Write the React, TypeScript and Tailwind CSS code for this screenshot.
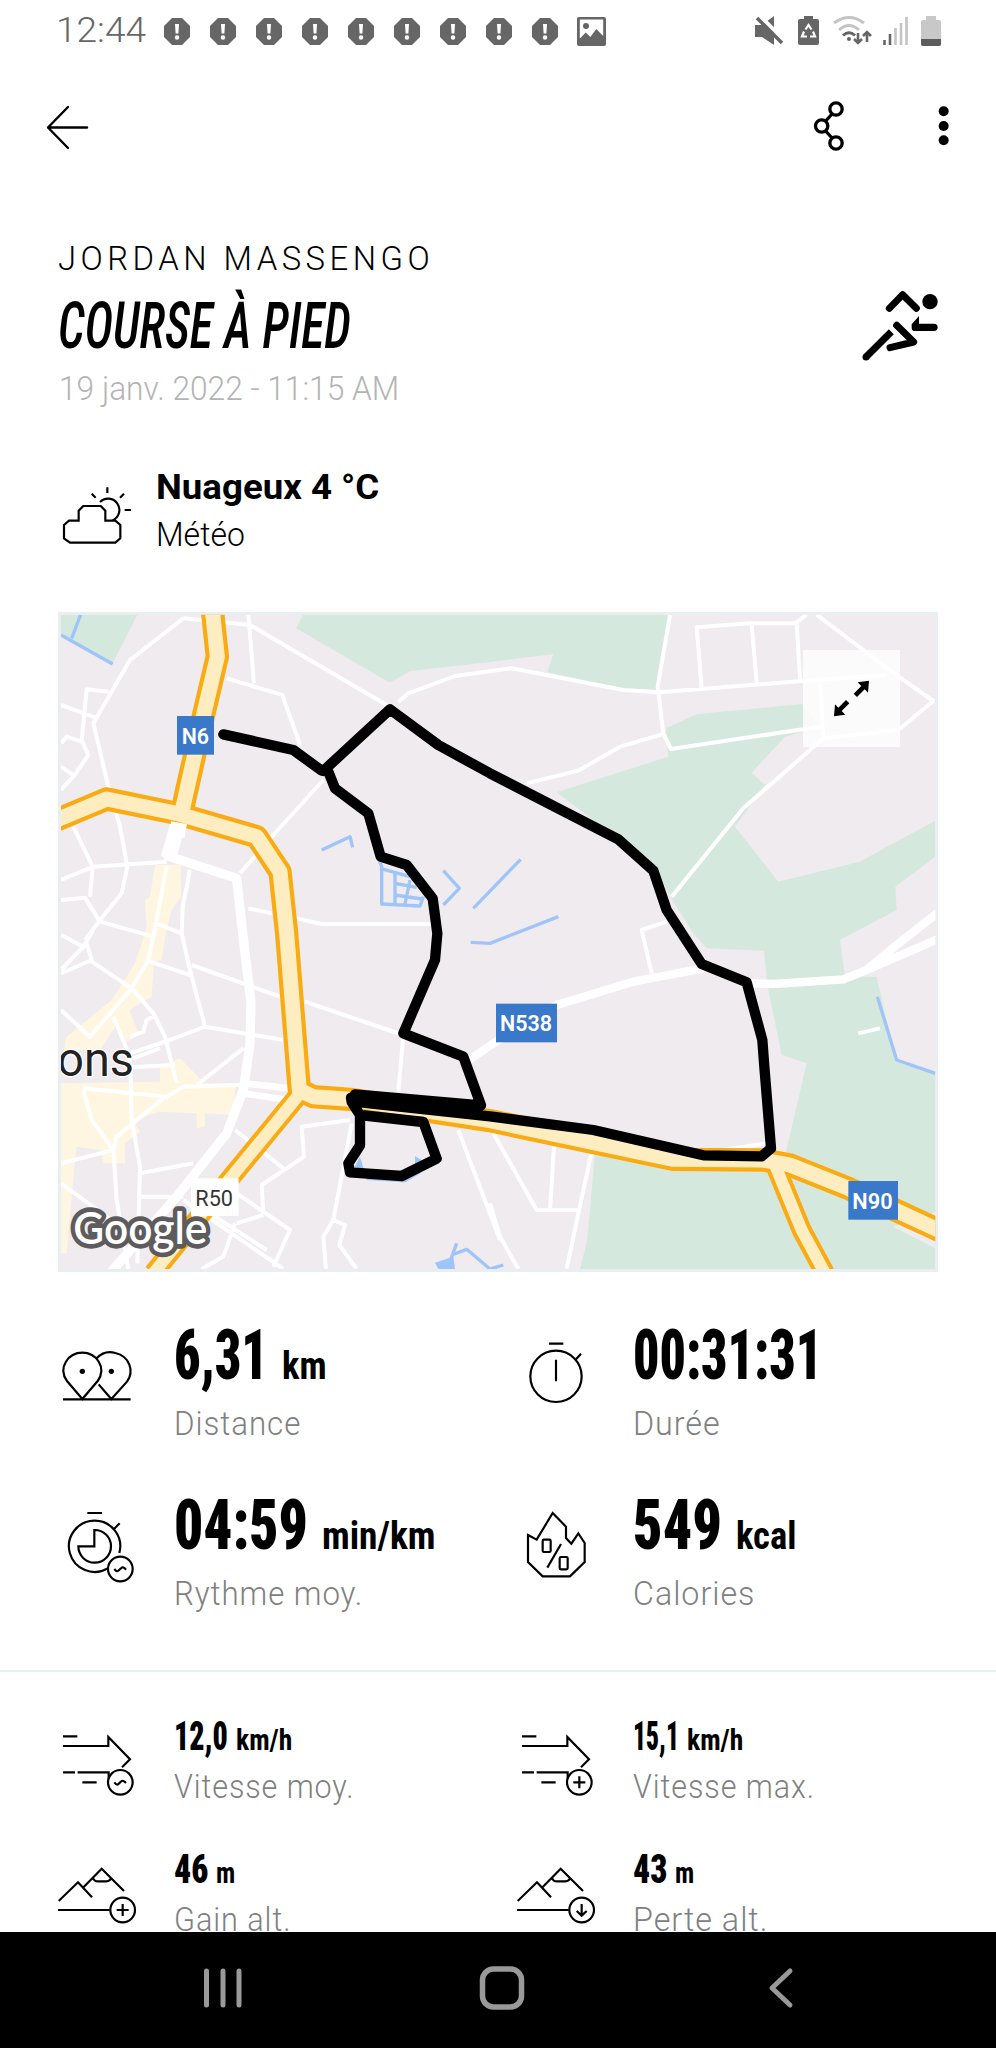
import { useLayoutEffect, useRef, useState, type ReactNode } from "react";

/** Condenses or widens a run of text so that it fills the given width. */
function Fit({ width, className = "", children }: { width: number; className?: string; children: ReactNode }) {
  const ref = useRef<HTMLSpanElement>(null);
  const [scale, setScale] = useState(1);
  useLayoutEffect(() => {
    const measure = () => {
      if (ref.current) setScale(width / ref.current.offsetWidth);
    };
    measure();
    document.fonts.ready.then(measure);
  }, [width]);
  return (
    <span className="inline-block whitespace-nowrap" style={{ width }}>
      <span ref={ref} className={`inline-block origin-left ${className}`} style={{ transform: `scaleX(${scale})` }}>
        {children}
      </span>
    </span>
  );
}

function Alert() {
  return (
    <svg width="26" height="27" viewBox="0 0 26 27">
      <path d="M8 0h10l8 8v11l-8 8H8l-8-8V8z" fill="#666" />
      <path d="M11 6h4l-.6 9.500h-2.800z" fill="#fff" />
      <circle cx="13" cy="19.500" r="2.200" fill="#fff" />
    </svg>
  );
}

function StatusBar() {
  return (
    <div className="flex h-[62px] shrink-0 items-center pl-[56px] pr-[55px] text-[#666]">
      <Fit width={90} className="text-[35px] font-[350] leading-none">12:44</Fit>
      <div className="ml-[18px] flex gap-5">
        {Array.from({ length: 9 }, (_, i) => (
          <Alert key={i} />
        ))}
      </div>
      <svg className="ml-[19px]" width="29" height="29" viewBox="0 0 29 29">
        <path fillRule="evenodd" fill="#666" d="M2 0h25a2 2 0 0 1 2 2v25a2 2 0 0 1-2 2H2a2 2 0 0 1-2-2V2a2 2 0 0 1 2-2zm.8 2.6v19l6-6 4.5 4.5 6-8.2 6.900 7V2.600z" />
        <circle cx="9" cy="9" r="3" fill="#666" />
      </svg>
      <div className="ml-auto flex items-center">
        <svg width="29" height="30" viewBox="0 0 29 30">
          <path d="M0 9h7L19 0v29L7 21H0z" fill="#666" />
          <path d="M2-3L31 26" stroke="#fff" strokeWidth="4" />
          <path d="M2 2l25 25" stroke="#666" strokeWidth="3.500" />
        </svg>
        <svg className="ml-[14px]" width="21" height="30" viewBox="0 0 21 30">
          <path d="M6 0h9v3h4a2 2 0 0 1 2 2v22a2 2 0 0 1-2 2H2a2 2 0 0 1-2-2V5a2 2 0 0 1 2-2h4z" fill="#666" />
          <path d="M7.500 13.500l3-4.500 3 4.500M15 15.500l2 5h-5M9 20.500H4l2-5" fill="none" stroke="#fff" strokeWidth="2.200" />
        </svg>
        <svg className="ml-[14px]" width="40" height="30" viewBox="0 0 40 30">
          <g fill="none" strokeWidth="3">
            <path d="M1 7q15-11 30 0M6 14q10-9 20 0" stroke="#c4c4c4" />
            <path d="M10 19.500q6-5.500 12 0" stroke="#666" />
          </g>
          <circle cx="16" cy="23" r="2" fill="#666" />
          <path d="M25 17v10M21 23l4 4 4-4M34 26V16M30 20l4-4 4 4" fill="none" stroke="#666" strokeWidth="2.600" />
        </svg>
        <svg className="ml-[10px]" width="25" height="30" viewBox="0 0 25 30">
          <path d="M1.500 24v5M7 18v11" stroke="#666" strokeWidth="2.600" />
          <path d="M12.500 12v17M18 7v22M23.500 1v28" stroke="#c4c4c4" strokeWidth="2.600" />
        </svg>
        <svg className="ml-[13px]" width="20" height="31" viewBox="0 0 20 31">
          <path d="M5 0h10v4h3a2 2 0 0 1 2 2v22a2 2 0 0 1-2 2H2a2 2 0 0 1-2-2V6a2 2 0 0 1 2-2h3z" fill="#c8c8c8" />
          <path d="M0 23h20v5a2 2 0 0 1-2 2H2a2 2 0 0 1-2-2z" fill="#5c5c5c" />
        </svg>
      </div>
    </div>
  );
}

function Toolbar() {
  return (
    <div className="flex h-[128px] shrink-0 items-center pl-[46px] pr-[47px]">
      <svg width="44" height="48" viewBox="0 0 44 48" fill="none" stroke="#000" strokeWidth="2.400" strokeLinecap="round" strokeLinejoin="round">
        <path d="M22 5L2 25.500 22 46M2 25.500h39" />
      </svg>
      <svg className="ml-auto" width="32" height="54" viewBox="158 115 96 162" fill="none" stroke="#000" strokeWidth="10">
        <circle cx="227" cy="145" r="18.500" />
        <circle cx="184" cy="196" r="18.500" />
        <circle cx="227" cy="247" r="18.500" />
        <path d="M196 181l19-21M196 211l19 21" />
      </svg>
      <svg className="ml-[93px]" width="11" height="42" viewBox="532 135 33 126">
        <circle cx="549" cy="154" r="15" />
        <circle cx="549" cy="198" r="15" />
        <circle cx="549" cy="241" r="15" />
      </svg>
    </div>
  );
}

function Runner() {
  return (
    <svg className="mt-[50px]" width="79" height="72" viewBox="301 684 237 216" fill="none" stroke="#000" strokeWidth="21" strokeLinecap="round">
      <path d="M386 742l40-41 41 41" strokeLinejoin="round" />
      <circle cx="508" cy="722" r="23" fill="#000" stroke="none" />
      <path d="M453 790l22-25v23h45a11 11 0 0 1 0 22h-57a10 10 0 0 1-10-10z" fill="#000" stroke="none" />
      <path d="M408 793l51 50-71 17" strokeLinejoin="round" />
      <path d="M316 888l76-76" strokeLinecap="butt" />
      <circle cx="316" cy="888" r="10.500" fill="#000" stroke="none" />
    </svg>
  );
}

function Heading() {
  return (
    <div className="flex shrink-0 justify-between pl-[58px] pr-[56px] pt-[49px]">
      <div className="flex flex-col">
        <Fit width={376} className="text-[33px] font-[350] leading-[40px] tracking-[4.500px] text-black">JORDAN MASSENGO</Fit>
        <h1 className="mt-[12px]">
          <Fit width={293} className="font-['Roboto_Condensed'] text-[65px] font-medium italic leading-[70px]">COURSE À PIED</Fit>
        </h1>
        <div className="mt-[8px] pl-px">
          <Fit width={340} className="text-[33px] font-[350] leading-[40px] text-[#b4b4b4]">19 janv. 2022 - 11:15 AM</Fit>
        </div>
      </div>
      <Runner />
    </div>
  );
}

function Weather() {
  return (
    <div className="flex shrink-0 pl-[62px] pt-[58px]">
      <svg className="mt-[18px]" width="70" height="60" viewBox="186 795 210 180" fill="none" stroke="#000" strokeWidth="6.500">
        <path d="M192 915l15-13h29v-30l14-14h52l14 14v30h30l15 13v40l-15 13H210l-18-13z" />
        <path d="M300 846A34 34 0 1 1 338 901M322 802v17M275 821l12 12M372 821l-12 12M374 870h19" />
      </svg>
      <div className="ml-6 flex flex-col">
        <Fit width={223} className="text-[34.5px] font-bold leading-[40px]">Nuageux 4 °C</Fit>
        <Fit width={89} className="mt-2 text-[33px] font-[350] leading-[40px]">Météo</Fit>
      </div>
    </div>
  );
}

const MINOR_ROADS =
  "M175 275L110 268 95 420 115 465 70 530 33 570M33 315L135 352M33 430L50 410 95 425M33 500L75 530" +
  "M400 55L240 180 130 370 175 560 210 680 232 800 215 880 150 960 105 1020M400 55L600 75 1010 315" +
  "M595 44L612 250M530 235L697 285 750 435M820 540L670 705 570 820M70 680L128 800 120 890" +
  "M33 840L130 800 350 785M33 900L105 893 150 965 310 1010M350 800L318 970 295 1080 245 1165 120 1310 33 1230" +
  "M420 810L398 920 395 1000 420 1110 465 1280M318 970L395 1000M595 925L665 940M740 955L815 972H1150" +
  "M33 1005L100 1040 130 990M33 1110L110 1030 125 1080 33 1120M125 1085L245 1165 310 1240 345 1310 380 1450" +
  "M300 1085L420 1125M425 1095L690 1190M765 1205L1060 1305 1045 1475M190 1250L240 1370 245 1560 270 1700 262 1990" +
  "M240 1310L280 1295 290 1260 320 1245M240 1360L360 1320 465 1280 700 1320M240 1402L375 1395M250 1375L330 1345" +
  "M580 1345L440 1455M100 1465L350 1490 400 1460 570 1455M100 1470L125 1560 190 1650 33 1690" +
  "M190 1650L200 1610 340 1495M190 1650L200 1800 235 2007M33 1750L210 1880M270 1720L430 1690M265 1790H400" +
  "M555 1590L700 1705M900 1560L755 1580 762 1670 635 1755 640 1840M400 1800L700 2007M480 1840L650 1950" +
  "M560 1780L720 1890 670 2000M560 1870L640 1845M555 1870L520 1970 455 2007" +
  "M905 1570L850 1860 885 1875 868 1935 920 2007M850 1860L820 1910 828 2007M1225 1590L1350 1920" +
  "M1330 1600L1460 1830H1590M1512 1640L1500 1830M1625 1655L1585 1840 1550 2007M1320 1810L1350 1910 1405 2007" +
  "M1045 305L1075 280 1215 228 1385 205 1720 270 1830 277 1980 265 2255 243 2510 225" +
  "M1860 44L1823 260 1840 400 1863 447 2310 380M1430 550L1585 512 1710 440 1840 402" +
  "M1955 265L1940 82 2100 70H2235L2270 44M2105 70L2120 250M2240 70L2250 240" +
  "M2300 44L2525 215 2650 303 2545 390 2320 415 2080 625 1865 890M2310 250L2320 415M1850 965L1775 990 1805 1120" +
  "M2425 1300L2490 1285M1980 1655L2150 1630";

const HIGHWAYS = [
  "M487 30L502 170 462 340 398 625",
  "M20 660L170 597 380 640 620 710 690 815 710 1000 748 1470 790 1490 900 1498 1320 1562 1870 1678 2140 1680 2220 1695 2395 1765 2680 1897",
  "M2175 1695L2255 1890 2325 2020",
  "M750 1480L545 1730 310 2020",
];

const ROUTE =
  "M520 403L730 450 815 512 835 515 855 565 955 640 992 770 1070 795 1148 895 1162 1000 1155 1080 1060 1300 1240 1370 1293 1516 915 1483" +
  "M825 508L1020 328 1165 435 1320 520 1705 718 1810 812 1850 930 1955 1092 2090 1147 2137 1320 2143 1400 2163 1645 2135 1669 1960 1666 1630 1590 1320 1549 910 1505" +
  "M903 1493L905 1506 930 1545 1120 1566 1160 1676 1055 1728 900 1717 895 1690 930 1636V1545";

function Shield({ x, y, w, label, tx, tw }: { x: number; y: number; w: number; label: string; tx: number; tw: number }) {
  return (
    <g>
      <rect x={x} y={y} width={w} height="116" fill="#3a78c9" />
      <text x={tx} y={y + 83} textLength={tw} lengthAdjust="spacingAndGlyphs" fontSize="64" fontWeight="600" fill="#fff">{label}</text>
    </g>
  );
}

function RouteMap() {
  return (
    <div className="relative ml-[58px] mt-[57px] h-[660px] w-[880px] shrink-0 overflow-hidden">
      <svg width="880" height="660" viewBox="24 36 2640 1980" fill="none" strokeLinejoin="round">
        <rect x="24" y="36" width="2640" height="1980" fill="#e9eff0" />
        <clipPath id="mapArea">
          <rect x="33" y="44" width="2623" height="1963" />
        </clipPath>
        <g clipPath="url(#mapArea)">
          <rect x="33" y="44" width="2623" height="1963" fill="#efebef" />
          <g fill="#d5e8dd">
            <path d="M33 44H262L188 190 33 105z" />
            <path d="M760 44L738 85 1020 248 1080 213 1320 186 1510 162 1492 216 1720 268 1822 272 1858 44z" />
            <path transform="translate(1320)" d="M528 385L620 343 935 312 990 380 885 410 785 518 825 555 735 680 865 845 1110 785 1200 735 1336 662V770L1216 860 1220 930 1050 1020 1065 1130H1160L1218 1385 1336 1422V2007H270L292 1920 315 1660H860L888 1655 950 1390 875 1365 832 1155 822 1052 650 1045 610 1000 550 905 500 815 390 720 270 630 200 577 535 470z" />
          </g>
          <path d="M2656 1835L2530 1880 2656 1945z" fill="#efebef" />
          <g fill="#fff6e1">
            <path d="M315 795H392L393 890 365 930 345 1010 335 1080 312 1085 305 1190 238 1230 268 1305 230 1325 200 1275 150 1350H60L33 1400 50 1310 100 1270 185 1200 255 1090 275 1030 290 980 285 900 300 890z" />
            <path d="M33 1450L330 1445V1400L390 1375 440 1425 460 1450H560L545 1545 465 1540V1580L440 1585V1540L330 1535 250 1560 270 1595 225 1630V1690H160L150 1650 80 1640 75 1680 50 1960H33z" />
          </g>
          <g stroke="#9fc5f8" strokeWidth="10">
            <path d="M33 105L188 192M92 44L65 115M815 750L900 710 908 742M975 745L995 800V912L1110 918 1120 890M990 805L1080 830M1035 820V910M1080 840L1065 912M1035 850L1100 862M1035 885L1115 897M1180 812L1228 865 1180 915M1270 925L1412 778M1262 1027L1320 1030 1525 950M2482 1190L2540 1380 2656 1420M1200 1985L1220 1930M1205 1965L1250 1948 1320 2007 1360 1995M950 1735L1065 1742 1110 1715" />
            <path d="M1155 1988L1210 1970 1215 2007H1165zM930 1670L912 1705 942 1710zM1095 1668L1130 1690 1095 1695z" fill="#9fc5f8" stroke="none" />
          </g>
          <path d={MINOR_ROADS} stroke="#fff" strokeWidth="12" />
          <g stroke="#fff">
            <path d="M387 660L355 775" strokeWidth="46" />
            <path d="M345 765L560 835 577 990 603 1210 600 1330 580 1470 530 1600 380 1790 180 2020" strokeWidth="28" />
            <path d="M580 1450L720 1465M580 1480L715 1500" strokeWidth="20" />
            <path d="M1250 1385L1330 1330M1330 1330L1520 1215 1750 1145 1960 1105M2090 1150L2170 1152 2380 1138 2450 1110 2680 1010M2450 1110L2540 1035 2680 925" strokeWidth="25" />
          </g>
          {HIGHWAYS.map((d, i) => (
            <path key={d} d={d} stroke="#f9ab14" strokeWidth={i < 2 ? 70 : 60} />
          ))}
          {HIGHWAYS.map((d, i) => (
            <path key={d} d={d} stroke="#ffedc2" strokeWidth={i < 2 ? 45 : 36} />
          ))}
          <path d="M387 668L380 710" stroke="#fff" strokeWidth="48" />
          <path d={ROUTE} stroke="#000" strokeWidth="31" strokeLinecap="round" />
          <g className="font-['Roboto']">
            <Shield x={381} y={348} w={111} label="N6" tx={395} tw={82} />
            <Shield x={1338} y={1211} w={183} label="N538" tx={1350} tw={156} />
            <Shield x={2395} y={1743} w={149} label="N90" tx={2407} tw={121} />
            <rect x="423" y="1735" width="143" height="113" fill="#fff" />
            <text x="436" y="1817" textLength="113" lengthAdjust="spacingAndGlyphs" fontSize="64" fill="#333">R50</text>
            <text x="22" y="1428" textLength="230" lengthAdjust="spacingAndGlyphs" fontSize="142" fill="#222" stroke="#fff" strokeWidth="8" paintOrder="stroke">ons</text>
          </g>
          <text className="font-['Lato']" x="70" y="1932" textLength="402" lengthAdjust="spacingAndGlyphs" fontSize="134" fontWeight="600" fill="#fff" stroke="#5d5b5c" strokeWidth="28" paintOrder="stroke">Google</text>
        </g>
      </svg>
      <button className="absolute left-[745px] top-[38px] flex h-[97px] w-[97px] items-center justify-center bg-white/80">
        <svg width="37" height="37" viewBox="1027 240 111 111">
          <path d="M1135 242l-34 5 11 11-23 23 10 10 23-23 10 10zM1030 349l34-5-11-11 23-23-10-10-23 23-10-10z" />
        </svg>
      </button>
    </div>
  );
}

function Badge({ cx, cy, kind }: { cx: number; cy: number; kind: "avg" | "plus" | "down" }) {
  return (
    <g transform={`translate(${cx} ${cy})`}>
      <circle r="37" fill="#fff" />
      {kind === "avg" && <path d="M-18 0q7 9 11 6l10-9q5-5 14 5" />}
      {kind === "plus" && <path d="M-18 0h36M0-18v36" />}
      {kind === "down" && <path d="M0-18v34M-15 3L0 17 15 3" />}
    </g>
  );
}

function StatIcon({ viewBox, children }: { viewBox: string; children: ReactNode }) {
  return (
    <svg className="h-[90px] w-[100px] shrink-0" viewBox={viewBox} fill="none" stroke="#000" strokeWidth="6.500">
      {children}
    </svg>
  );
}

const distanceIcon = (
  <StatIcon viewBox="54 48 300 270">
    <path d="M170 145C186 128 208 124 226 129 270 139 283 185 261 215L214 267 176 223" />
    <path d="M127 267L81 213C52 172 86 128 127 128S202 172 173 213z" />
    <path d="M69 268H272" />
    <circle cx="127" cy="184" r="8" fill="#000" stroke="none" />
    <circle cx="214" cy="184" r="8" fill="#000" stroke="none" />
  </StatIcon>
);

const durationIcon = (
  <StatIcon viewBox="51 48 300 270">
    <circle cx="168" cy="199" r="77" />
    <path d="M147 101h43M168 149v65M226 150l17-19" />
  </StatIcon>
);

const paceIcon = (
  <StatIcon viewBox="54 558 300 270">
    <path d="M203 775A77 77 0 1 1 238 729M142 609h44M222 657l17-17M163 660a49 49 0 1 1-48 49h48z" />
    <Badge cx={241} cy={777} kind="avg" />
  </StatIcon>
);

const caloriesIcon = (
  <StatIcon viewBox="51 558 300 270">
    <path d="M84 675l26 14 48-80 40 41v34l16 17 21-31 19 29v57l-44 43h-82l-44-43z" />
    <path d="M183 702l-41 71" />
    <rect x="128" y="689" width="24" height="37" rx="4" />
    <rect x="179" y="741" width="24" height="37" rx="4" />
  </StatIcon>
);

function SpeedIcon({ kind }: { kind: "avg" | "plus" }) {
  return (
    <StatIcon viewBox="54 201 300 270">
      <path d="M69 256h43M69 285h136v-27l65 67-24 24M69 364h36M113 364h93v20M127 394h43" />
      <Badge cx={241} cy={394} kind={kind} />
    </StatIcon>
  );
}

function AltitudeIcon({ kind }: { kind: "plus" | "down" }) {
  return (
    <StatIcon viewBox="54 600 300 270">
      <path d="M56 750l58-56 42 45M129 710l56-57 67 67M159 680q3 11 15 11h25q11 0 15-11M54 777h155" />
      <Badge cx={248} cy={777} kind={kind} />
    </StatIcon>
  );
}

type StatProps = { icon: ReactNode; value: string; vw: number; unit?: string; uw?: number; label: string; lw: number };

function MainStat({ icon, value, vw, unit, uw = 0, label, lw }: StatProps) {
  return (
    <div className="flex h-[118px] gap-[16px]">
      {icon}
      <div>
        <div className="flex h-[58px] items-baseline gap-[14px] font-['Roboto_Condensed']">
          <Fit width={vw} className="text-[71px] font-black leading-[58px]">{value}</Fit>
          {unit && <Fit width={uw} className="text-[39px] font-bold leading-none">{unit}</Fit>}
        </div>
        <div className="mt-[20px] text-[#808080]">
          <Fit width={lw} className="text-[33px] font-[350] leading-[40px] tracking-[1px]">{label}</Fit>
        </div>
      </div>
    </div>
  );
}

function MinorStat({ icon, value, vw, unit, uw = 0, label, lw }: StatProps) {
  return (
    <div className="flex h-[90px] gap-[16px]">
      {icon}
      <div>
        <div className="flex h-[36px] items-baseline gap-[8px] font-['Roboto_Condensed']">
          <Fit width={vw} className="text-[41.5px] font-black leading-[36px]">{value}</Fit>
          <Fit width={uw} className="text-[30px] font-bold leading-none">{unit}</Fit>
        </div>
        <div className="mt-[13px] text-[#808080]">
          <Fit width={lw} className="text-[33px] font-[350] leading-[40px] tracking-[1px]">{label}</Fit>
        </div>
      </div>
    </div>
  );
}

function NavBar() {
  return (
    <div className="flex h-[116px] shrink-0 items-center bg-black pb-[5px] pl-[201px]">
      <svg width="44" height="44" viewBox="0 0 44 44" stroke="#999" strokeWidth="5" strokeLinecap="round">
        <path d="M5.500 5v34M22 5v34M38 5v34" />
      </svg>
      <svg className="ml-[234px]" width="46" height="46" viewBox="0 0 46 46" fill="none" stroke="#999" strokeWidth="5.500">
        <rect x="3.500" y="4" width="39" height="38" rx="11" />
      </svg>
      <svg className="ml-[241px]" width="30" height="44" viewBox="0 0 30 44" fill="none" stroke="#999" strokeWidth="5" strokeLinecap="round" strokeLinejoin="round">
        <path d="M24 5L6 22l18 17" />
      </svg>
    </div>
  );
}

export default function App() {
  return (
    <div className="flex h-[2048px] w-[996px] flex-col overflow-hidden bg-white font-['Roboto'] text-black">
      <StatusBar />
      <Toolbar />
      <Heading />
      <Weather />
      <RouteMap />
      <div className="ml-[58px] mt-[54px] grid shrink-0 grid-cols-[459px_459px] gap-y-[52px]">
        <MainStat icon={distanceIcon} value="6,31" vw={94} unit="km" uw={45} label="Distance" lw={127} />
        <MainStat icon={durationIcon} value="00:31:31" vw={189} label="Durée" lw={88} />
        <MainStat icon={paceIcon} value="04:59" vw={134} unit="min/km" uw={113} label="Rythme moy." lw={189} />
        <MainStat icon={caloriesIcon} value="549" vw={89} unit="kcal" uw={60} label="Calories" lw={122} />
      </div>
      <div className="mt-[56px] h-[2px] shrink-0 bg-[#e9f0f0]" />
      <div className="ml-[58px] mt-[46px] grid min-h-0 flex-1 grid-cols-[459px_459px] grid-rows-[90px_90px] gap-y-[43px] overflow-hidden">
        <MinorStat icon={<SpeedIcon kind="avg" />} value="12,0" vw={54} unit="km/h" uw={56} label="Vitesse moy." lw={180} />
        <MinorStat icon={<SpeedIcon kind="plus" />} value="15,1" vw={46} unit="km/h" uw={56} label="Vitesse max." lw={182} />
        <MinorStat icon={<AltitudeIcon kind="plus" />} value="46" vw={34} unit="m" uw={19} label="Gain alt." lw={117} />
        <MinorStat icon={<AltitudeIcon kind="down" />} value="43" vw={34} unit="m" uw={19} label="Perte alt." lw={135} />
      </div>
      <NavBar />
    </div>
  );
}
